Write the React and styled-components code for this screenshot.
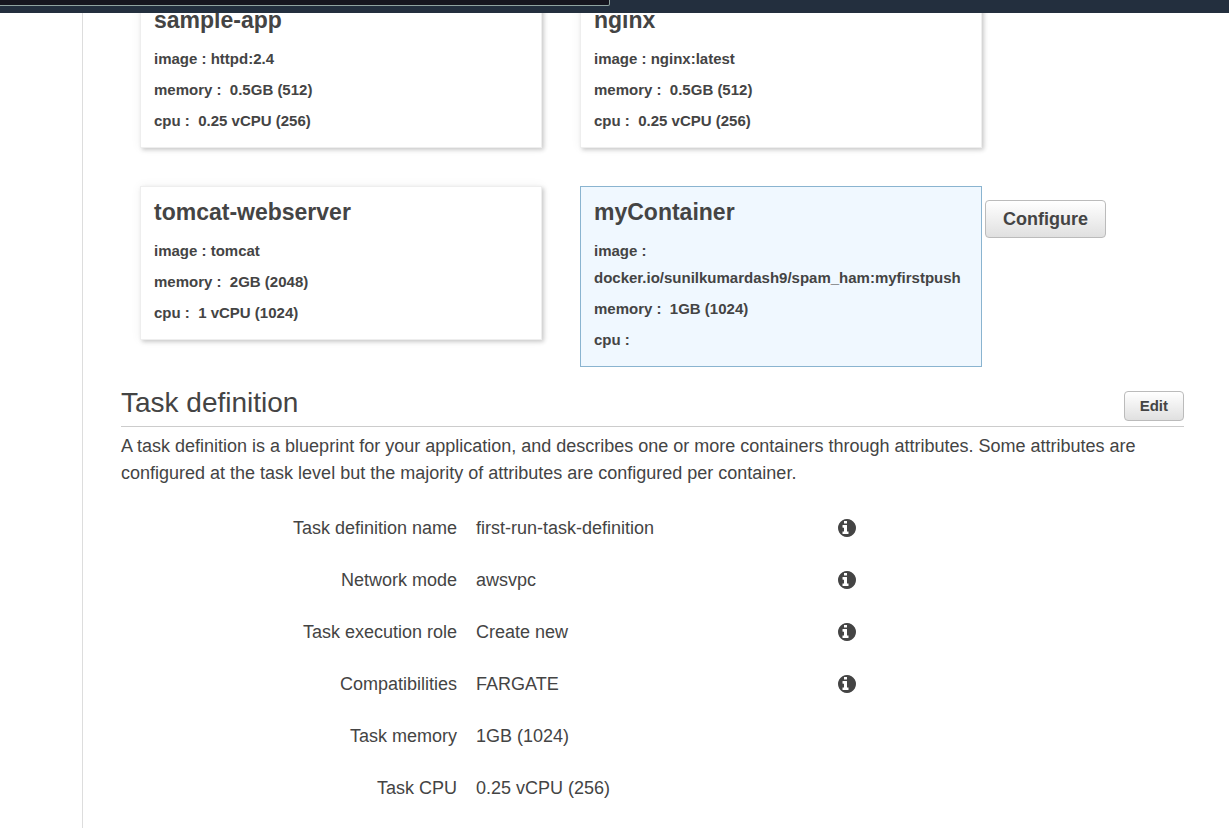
import styled, { createGlobalStyle } from "styled-components";

const GlobalStyle = createGlobalStyle`
    * {
        box-sizing: border-box;
    }
    body {
        margin: 0;
        background: #fff;
        color: #444;
        font-family: "Liberation Sans", Arial, sans-serif;
        font-size: 18px;
        line-height: 27px;
    }
`
const Page = styled.div`
    display: flex;
    flex-direction: column;
    height: 100vh;
    overflow: hidden;
`
// Only the lower edge of the navigation bar stays in view
const TopBar = styled.header`
    display: flex;
    flex: none;
    align-items: flex-end;
    height: 13px;
    padding-bottom: 7px;
    overflow: hidden;
    background: #232f3e;
`
const SearchInput = styled.input`
    flex: 0 1 610px;
    min-width: 0;
    height: 32px;
    border: 1px solid #8fa3a0;
    border-left: 0;
    border-radius: 0 0 2px 0;
    background: #16161f;
    color: #fff;
`
const Body = styled.div`
    display: flex;
    flex: 1;
    min-height: 0;
    overflow: hidden;
`
const Sidebar = styled.aside`
    flex: none;
    width: 83px;
    border-right: 1px solid #ddd;
`
const Main = styled.main`
    flex: 1;
    min-width: 0;
    margin-top: -19px;
    padding: 0 45px 0 38px;
`
const Containers = styled.section`
    display: flex;
    flex-direction: column;
    gap: 38px;
    padding-left: 19px;
`
const ContainerRow = styled.div`
    display: flex;
    gap: 3px;
`
const CardPair = styled.div`
    display: grid;
    flex: 1;
    grid-template-columns: repeat(2, minmax(0, 1fr));
    align-items: start;
    gap: 38px;
`
const Action = styled.div`
    flex: none;
    width: 199px;
    padding-top: 14px;
`
const Card = styled.article`
    padding: 11px 13px 13px;
    border: 1px solid ${props => props.$selected ? "#8ab4d0" : "#eee"};
    background: ${props => props.$selected ? "#f0f8ff" : "#fff"};
    box-shadow: ${props => props.$selected ? "none" : "2px 2px 4px rgba(0, 0, 0, 0.18), 0 0 10px rgba(0, 0, 0, 0.06)"};
    font-size: 15px;
    font-weight: 700;
`
const CardTitle = styled.h3`
    margin: 0 0 11px;
    font-size: 23px;
    line-height: 28px;
`
const CardLine = styled.p`
    margin: 0;
    overflow-wrap: break-word;
    white-space: pre-wrap;

    & + & {
        margin-top: 4px;
    }
`
const Button = styled.button`
    height: ${props => props.$large ? "38px" : "30px"};
    padding: ${props => props.$large ? "0 17px" : "0 15px 2px"};
    border: 1px solid #bbb;
    border-radius: 4px;
    background: linear-gradient(#fff, #e0e0e0);
    color: #444;
    font-family: inherit;
    font-size: ${props => props.$large ? "18px" : "15px"};
    font-weight: 700;
    cursor: pointer;
`
const SectionHeader = styled.div`
    display: flex;
    align-items: flex-start;
    justify-content: space-between;
    margin-top: 24px;
    padding-bottom: 5px;
    border-bottom: 1px solid #ccc;
`
const SectionTitle = styled.h2`
    margin: 0;
    font-size: 28px;
    font-weight: 400;
    line-height: 24px;
`
const Description = styled.p`
    margin: 6px 0 28px;
`
const Details = styled.dl`
    display: flex;
    flex-direction: column;
    gap: 25px;
    margin: 0;
`
const DetailRow = styled.div`
    display: grid;
    grid-template-columns: 336fr 343fr 346fr;
    align-items: start;
    gap: 19px;
`
const Label = styled.dt`
    text-align: right;
`
const Value = styled.dd`
    margin: 0;
`
const InfoButton = styled.button`
    display: flex;
    justify-self: start;
    padding: 4px 0 0;
    border: 0;
    background: none;
    color: #444;
    cursor: pointer;
`

const containerRows = [
    [
        { name: "sample-app", image: "httpd:2.4", memory: "0.5GB (512)", cpu: "0.25 vCPU (256)" },
        { name: "nginx", image: "nginx:latest", memory: "0.5GB (512)", cpu: "0.25 vCPU (256)" },
    ],
    [
        { name: "tomcat-webserver", image: "tomcat", memory: "2GB (2048)", cpu: "1 vCPU (1024)" },
        {
            name: "myContainer",
            image: "docker.io/sunilkumardash9/spam_ham:myfirstpush",
            memory: "1GB (1024)",
            cpu: "",
            selected: true,
        },
    ],
];

const details = [
    { label: "Task definition name", value: "first-run-task-definition", info: true },
    { label: "Network mode", value: "awsvpc", info: true },
    { label: "Task execution role", value: "Create new", info: true },
    { label: "Compatibilities", value: "FARGATE", info: true },
    { label: "Task memory", value: "1GB (1024)" },
    { label: "Task CPU", value: "0.25 vCPU (256)" },
];

function InfoIcon(){
    return (
        <svg width="18" height="18" viewBox="128 128 1536 1536" fill="currentColor" aria-hidden="true">
            <path d="M1024 1376v-160q0-14-9-23t-23-9h-96v-512q0-14-9-23t-23-9h-320q-14 0-23 9t-9 23v160q0 14 9 23t23 9h96v320h-96q-14 0-23 9t-9 23v160q0 14 9 23t23 9h448q14 0 23-9t9-23zM896 480v-160q0-14-9-23t-23-9h-192q-14 0-23 9t-9 23v160q0 14 9 23t23 9h192q14 0 23-9t9-23zM1664 896q0 209-103 385.5t-279.5 279.5-385.5 103-385.5-103-279.5-279.5-103-385.5 103-385.5 279.5-279.5 385.5-103 385.5 103 279.5 279.5 103 385.5z" />
        </svg>
    );
}

function ContainerCard({ item }){
    return (
        <Card $selected={item.selected}>
            <CardTitle>{item.name}</CardTitle>
            <CardLine>image : {item.image}</CardLine>
            <CardLine>{"memory :  "}{item.memory}</CardLine>
            <CardLine>{"cpu :  "}{item.cpu}</CardLine>
        </Card>
    );
}

function App(){
    return (
        <Page>
            <GlobalStyle />
            <TopBar>
                <SearchInput type="search" aria-label="Search" />
            </TopBar>
            <Body>
                <Sidebar />
                <Main>
                    <Containers>
                        {containerRows.map((row, index) => (
                            <ContainerRow key={index}>
                                <CardPair>
                                    {row.map(item => <ContainerCard key={item.name} item={item} />)}
                                </CardPair>
                                <Action>
                                    {row.some(item => item.selected) && <Button type="button" $large>Configure</Button>}
                                </Action>
                            </ContainerRow>
                        ))}
                    </Containers>
                    <section>
                        <SectionHeader>
                            <SectionTitle>Task definition</SectionTitle>
                            <Button type="button">Edit</Button>
                        </SectionHeader>
                        <Description>
                            A task definition is a blueprint for your application, and describes one or more containers
                            through attributes. Some attributes are configured at the task level but the majority of
                            attributes are configured per container.
                        </Description>
                        <Details>
                            {details.map(({ label, value, info }) => (
                                <DetailRow key={label}>
                                    <Label>{label}</Label>
                                    <Value>{value}</Value>
                                    {info && (
                                        <InfoButton type="button" aria-label={"About " + label}>
                                            <InfoIcon />
                                        </InfoButton>
                                    )}
                                </DetailRow>
                            ))}
                        </Details>
                    </section>
                </Main>
            </Body>
        </Page>
    );
}

export default App;
